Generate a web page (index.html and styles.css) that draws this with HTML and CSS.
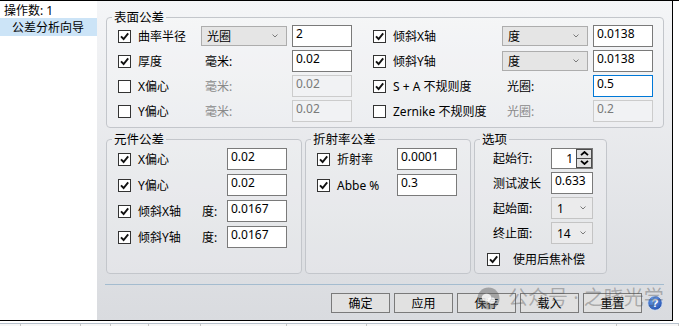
FILE: index.html
```html
<!DOCTYPE html>
<html lang="zh">
<head>
    <meta charset="UTF-8">
    <meta name="viewport" content="width=device-width, initial-scale=1.0">
    <title>公差分析向导</title>
    <link rel="stylesheet" href="styles.css">
</head>
<body>

<div class="screen">
    <div class="window">
        <aside class="sidebar">
            <div class="op-count">操作数: 1</div>
            <div class="nav-item active">公差分析向导</div>
        </aside>

        <main class="panel">
            <!-- 表面公差 -->
            <fieldset class="group surface">
                <legend>表面公差</legend>
                <div class="surface-grid">
                    <label class="check"><span class="box"><svg viewBox="0 0 11 11" width="11" height="11"><path d="M2 5.3l2.6 2.7L9.2 2.4" /></svg></span>曲率半径</label>
                    <div class="select wide"><span>光圈</span><svg class="chev" viewBox="0 0 6 4" width="6" height="4"><path d="M0.5 0.5L3 3L5.5 0.5" /></svg></div>
                    <input class="field" type="text" value="2">
                    <label class="check"><span class="box"><svg viewBox="0 0 11 11" width="11" height="11"><path d="M2 5.3l2.6 2.7L9.2 2.4" /></svg></span>倾斜X轴</label>
                    <div class="select wide"><span>度</span><svg class="chev" viewBox="0 0 6 4" width="6" height="4"><path d="M0.5 0.5L3 3L5.5 0.5" /></svg></div>
                    <input class="field" type="text" value="0.0138">

                    <label class="check"><span class="box"><svg viewBox="0 0 11 11" width="11" height="11"><path d="M2 5.3l2.6 2.7L9.2 2.4" /></svg></span>厚度</label>
                    <span class="unit">毫米:</span>
                    <input class="field" type="text" value="0.02">
                    <label class="check"><span class="box"><svg viewBox="0 0 11 11" width="11" height="11"><path d="M2 5.3l2.6 2.7L9.2 2.4" /></svg></span>倾斜Y轴</label>
                    <div class="select wide"><span>度</span><svg class="chev" viewBox="0 0 6 4" width="6" height="4"><path d="M0.5 0.5L3 3L5.5 0.5" /></svg></div>
                    <input class="field" type="text" value="0.0138">

                    <label class="check"><span class="box"></span>X偏心</label>
                    <span class="unit off">毫米:</span>
                    <input class="field" type="text" value="0.02" disabled>
                    <label class="check"><span class="box"><svg viewBox="0 0 11 11" width="11" height="11"><path d="M2 5.3l2.6 2.7L9.2 2.4" /></svg></span>S + A 不规则度</label>
                    <span class="unit right">光圈:</span>
                    <input class="field focus" type="text" value="0.5">

                    <label class="check"><span class="box"></span>Y偏心</label>
                    <span class="unit off">毫米:</span>
                    <input class="field" type="text" value="0.02" disabled>
                    <label class="check"><span class="box"></span>Zernike 不规则度</label>
                    <span class="unit right off">光圈:</span>
                    <input class="field" type="text" value="0.2" disabled>
                </div>
            </fieldset>

            <div class="group-row">
                <!-- 元件公差 -->
                <fieldset class="group element">
                    <legend>元件公差</legend>
                    <div class="element-grid">
                        <label class="check"><span class="box"><svg viewBox="0 0 11 11" width="11" height="11"><path d="M2 5.3l2.6 2.7L9.2 2.4" /></svg></span>X偏心</label>
                        <span></span>
                        <input class="field" type="text" value="0.02">
                        <label class="check"><span class="box"><svg viewBox="0 0 11 11" width="11" height="11"><path d="M2 5.3l2.6 2.7L9.2 2.4" /></svg></span>Y偏心</label>
                        <span></span>
                        <input class="field" type="text" value="0.02">
                        <label class="check"><span class="box"><svg viewBox="0 0 11 11" width="11" height="11"><path d="M2 5.3l2.6 2.7L9.2 2.4" /></svg></span>倾斜X轴</label>
                        <span>度:</span>
                        <input class="field" type="text" value="0.0167">
                        <label class="check"><span class="box"><svg viewBox="0 0 11 11" width="11" height="11"><path d="M2 5.3l2.6 2.7L9.2 2.4" /></svg></span>倾斜Y轴</label>
                        <span>度:</span>
                        <input class="field" type="text" value="0.0167">
                    </div>
                </fieldset>

                <!-- 折射率公差 -->
                <fieldset class="group index">
                    <legend>折射率公差</legend>
                    <div class="index-grid">
                        <label class="check"><span class="box"><svg viewBox="0 0 11 11" width="11" height="11"><path d="M2 5.3l2.6 2.7L9.2 2.4" /></svg></span>折射率</label>
                        <input class="field" type="text" value="0.0001">
                        <label class="check"><span class="box"><svg viewBox="0 0 11 11" width="11" height="11"><path d="M2 5.3l2.6 2.7L9.2 2.4" /></svg></span>Abbe %</label>
                        <input class="field" type="text" value="0.3">
                    </div>
                </fieldset>

                <!-- 选项 -->
                <fieldset class="group options">
                    <legend>选项</legend>
                    <div class="options-grid">
                        <span class="opt-label">起始行:</span>
                        <div class="spin">
                            <span class="spin-value">1</span>
                            <div class="spin-btns">
                                <span class="spin-btn"><svg viewBox="0 0 9 5" width="9" height="5"><path d="M1 4.2L4.5 1L8 4.2" /></svg></span>
                                <span class="spin-btn"><svg viewBox="0 0 9 5" width="9" height="5"><path d="M1 0.8L4.5 4L8 0.8" /></svg></span>
                            </div>
                        </div>

                        <span class="opt-label">测试波长</span>
                        <input class="field small" type="text" value="0.633">

                        <span class="opt-label">起始面:</span>
                        <div class="select small"><span>1</span><svg class="chev" viewBox="0 0 6 4" width="6" height="4"><path d="M0.5 0.5L3 3L5.5 0.5" /></svg></div>

                        <span class="opt-label">终止面:</span>
                        <div class="select small"><span>14</span><svg class="chev" viewBox="0 0 6 4" width="6" height="4"><path d="M0.5 0.5L3 3L5.5 0.5" /></svg></div>

                        <label class="check span-all"><span class="box"><svg viewBox="0 0 11 11" width="11" height="11"><path d="M2 5.3l2.6 2.7L9.2 2.4" /></svg></span>使用后焦补偿</label>
                    </div>
                </fieldset>
            </div>

            <div class="divider"></div>

            <div class="buttons">
                <button class="btn">确定</button>
                <button class="btn">应用</button>
                <button class="btn">保存</button>
                <button class="btn">载入</button>
                <button class="btn">重置</button>
                <svg class="help" viewBox="0 0 16 16" width="16" height="16">
                    <defs>
                        <radialGradient id="helpFill" cx="0.4" cy="0.3" r="0.8">
                            <stop offset="0" stop-color="#6fa2ee"/>
                            <stop offset="1" stop-color="#1a47a8"/>
                        </radialGradient>
                    </defs>
                    <circle cx="8" cy="8" r="7.3" fill="url(#helpFill)" stroke="#d8e2f0" stroke-width="1"/>
                    <text x="8" y="12.2" text-anchor="middle" font-size="11" font-weight="bold" fill="#fff" font-family="Liberation Sans, sans-serif">?</text>
                </svg>
            </div>

            <!-- watermark lying over the button row -->
            <div class="watermark">
                <svg viewBox="0 0 24 24" width="23" height="23">
                    <circle cx="12" cy="12" r="11.5" fill="rgba(90,90,90,0.45)"/>
                    <ellipse cx="10" cy="11" rx="5" ry="4" fill="rgba(255,255,255,0.8)"/>
                    <ellipse cx="15" cy="14" rx="4" ry="3.2" fill="rgba(255,255,255,0.8)"/>
                </svg>
                <span>公众号 · 之晓光学</span>
            </div>
        </main>
    </div>

    <div class="tabstrip">
        <span style="width: 21px"></span>
        <span style="width: 60px"></span>
        <span style="width: 30px"></span>
        <span style="width: 38px"></span>
        <span style="width: 52px"></span>
        <span style="width: 86px"></span>
        <span style="width: 80px"></span>
        <span style="width: 250px"></span>
        <span style="width: 62px"></span>
    </div>
</div>

</body>
</html>
```

FILE: styles.css
```css
/* Tolerance wizard dialog */
* {
    box-sizing: border-box;
}

body {
    margin: 0;
    width: 679px;
    height: 326px;
    overflow: hidden;
    background-color: #fff;
    font-family: "Noto Sans", "Noto Sans CJK SC", sans-serif;
    font-size: 12px;
    line-height: 15px;
    color: #000;
}

.screen {
    border-top: 1px solid #000;
}

.window {
    display: flex;
    width: 673px;
    height: 320px;
    border-right: 1px solid #000;
    border-bottom: 1px solid #000;
}

/* left tree */
.sidebar {
    width: 97px;
    background-color: #fff;
}

.op-count {
    height: 17px;
    padding: 2px 4px 0;
}

.nav-item {
    height: 18px;
    padding: 2px 12px 0;
}

.nav-item.active {
    background-color: #cce4f7;
}

/* right pane */
.panel {
    flex: 1;
    position: relative;
    padding: 9px 8px 0 9px;
    background: linear-gradient(#f4f5f7, #d9dbdf);
}

.group {
    margin: 0;
    min-width: 0;
    padding: 0 10px 5px 11px;
    border: 1px solid #c3c6cb;
    border-radius: 4px;
    background-color: rgba(255, 255, 255, 0.18);
}

.group legend {
    margin-left: -6px;
    padding: 0 2px;
    font-size: 12.5px;
    line-height: 15px;
}

.check {
    display: flex;
    align-items: center;
    gap: 7px;
    white-space: nowrap;
}

.box {
    display: flex;
    align-items: center;
    justify-content: center;
    width: 13px;
    height: 13px;
    border: 1px solid #333;
    background-color: #fff;
    flex-shrink: 0;
}

.box svg path {
    fill: none;
    stroke: #111;
    stroke-width: 1.9;
}

.field {
    width: 60px;
    height: 22px;
    margin: 0;
    padding: 0 2px 5px 3px;
    border: 1px solid #7a7a7a;
    border-radius: 0;
    background-color: #fff;
    font: inherit;
    line-height: 15px;
    color: #000;
    outline: none;
}

.field:disabled {
    border-color: #cccccc;
    background-color: #f1f2f4;
    color: #7a7a7a;
}

.field.focus {
    border-color: #0078d7;
}

.field.small {
    width: 42px;
}

.select {
    display: flex;
    align-items: center;
    justify-content: space-between;
    height: 20px;
    padding: 0 8px 0 5px;
    border: 1px solid #adadad;
    background-color: #e5e5e5;
}

.select.wide {
    width: 86px;
}

.select.small {
    width: 42px;
    height: 22px;
    padding: 0 6px 0 5px;
    border-color: #c4c4c4;
    background-color: #ebebec;
}

.chev path {
    fill: none;
    stroke: #7a7a7a;
    stroke-width: 1;
}

.unit {
    padding-left: 4px;
}

.unit.right {
    padding-left: 5px;
}

.unit.off {
    color: #8a8a8a;
}

/* grids inside the groups */
.surface-grid {
    display: grid;
    grid-template-columns: 83px 91px 81px 129px 91px 60px;
    grid-auto-rows: 22px;
    row-gap: 3px;
    align-items: center;
}

.group-row {
    display: flex;
    gap: 3px;
    height: 142px;
    margin-top: 4px;
}

.element {
    width: 196px;
    padding: 1px 14px 0 11px;
}

.element-grid {
    display: grid;
    grid-template-columns: 84px 25px 60px;
    grid-auto-rows: 22px;
    row-gap: 4px;
    align-items: center;
}

.index {
    width: 166px;
    padding: 1px 10px 0 11px;
}

.index-grid {
    display: grid;
    grid-template-columns: 80px 60px;
    grid-auto-rows: 22px;
    row-gap: 4px;
    align-items: center;
}

.options {
    width: 133px;
    padding: 0 13px 0 12px;
}

.options legend {
    margin-left: -7px;
}

.options-grid {
    display: grid;
    grid-template-columns: 64px 42px;
    grid-auto-rows: 22px;
    row-gap: 3px;
    align-items: center;
}

.opt-label {
    padding-left: 6px;
}

.span-all {
    grid-column: 1 / 3;
    gap: 13px;
    margin-top: 3px;
}

.spin {
    display: flex;
    align-items: stretch;
    width: 42px;
    height: 21px;
    border: 1px solid #7a7a7a;
    background-color: #fff;
}

.spin-value {
    flex: 1;
    padding-right: 3px;
    text-align: right;
    line-height: 19px;
}

.spin-btns {
    display: flex;
    flex-direction: column;
    width: 16px;
}

.spin-btn {
    flex: 1;
    display: flex;
    align-items: center;
    justify-content: center;
    border: 1px solid #4d4d4d;
    background-color: #e1e1e1;
}

.spin-btn + .spin-btn {
    border-top: none;
}

.spin-btn path {
    fill: none;
    stroke: #000;
    stroke-width: 1.8;
}

.divider {
    height: 1px;
    margin: 10px 0 0 -1px;
    background-color: #a4bccf;
}

.buttons {
    display: flex;
    justify-content: flex-end;
    align-items: center;
    gap: 4px;
    margin-top: 8px;
    padding-right: 1px;
}

.btn {
    width: 59px;
    height: 20px;
    margin: 0;
    padding: 0;
    border: 1px solid #7a7a7a;
    border-radius: 0;
    background-color: #e1e1e1;
    font: inherit;
    line-height: 17px;
    color: #000;
}

.help {
    margin-left: 1px;
}

.watermark {
    position: absolute;
    left: 380px;
    top: 285px;
    display: flex;
    align-items: center;
    gap: 8px;
    font-size: 20px;
    line-height: 24px;
    color: rgba(80, 80, 80, 0.38);
    white-space: nowrap;
    pointer-events: none;
}

/* strip under the dialog */
.tabstrip {
    display: flex;
    height: 5px;
    margin-top: 2px;
    border-top: 1px solid #b7c1cc;
    background-color: #f7f7f7;
}

.tabstrip span {
    border-right: 1px solid #c6c6c6;
}
```
